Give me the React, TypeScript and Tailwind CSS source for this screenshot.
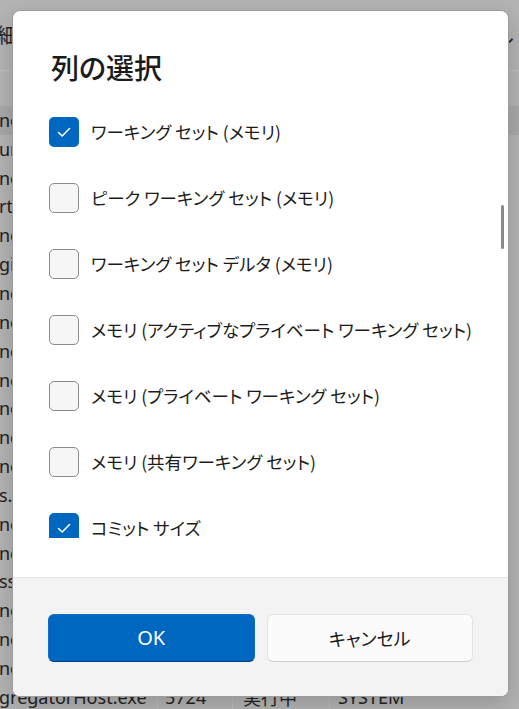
import React from 'react';

const items = [
  { label: 'ワーキング セット (メモリ)', checked: true },
  { label: 'ピーク ワーキング セット (メモリ)', checked: false },
  { label: 'ワーキング セット デルタ (メモリ)', checked: false },
  { label: 'メモリ (アクティブなプライベート ワーキング セット)', checked: false },
  { label: 'メモリ (プライベート ワーキング セット)', checked: false },
  { label: 'メモリ (共有ワーキング セット)', checked: false },
  { label: 'コミット サイズ', checked: true },
];

const rows = [
  'nc', 'ur', 'nc', 'rtl', 'nc', 'gis', 'nc', 'nc', 'nc', 'nc',
  'nc', 'nc', 'nc', 's.', 'nc', 'nc', 'ss.', 'nc', 'nc', 'nc',
];

function CheckBox({ checked }: { checked: boolean }) {
  if (checked) {
    return (
      <div className="w-[30px] h-[30px] shrink-0 rounded-[5px] bg-[#0067c0] flex items-center justify-center">
        <svg width="16" height="12" viewBox="0 0 16 12" fill="none">
          <path d="M2.5 6.5 L6.2 10 L13.5 2.5" stroke="white" strokeWidth="1.6" strokeLinecap="round" strokeLinejoin="round" />
        </svg>
      </div>
    );
  }
  return <div className="w-[30px] h-[30px] shrink-0 rounded-[5px] border border-[#8b8b8b] bg-[#f6f6f6]" />;
}

export default function App() {
  return (
    <div className="relative w-[519px] h-[709px] overflow-hidden bg-[#b4b4b4] text-[#222] font-['Noto_Sans_CJK_JP',sans-serif]">
      {/* Task manager behind the dialog */}
      <div className="h-[70px] flex items-center justify-between">
        <span className="ml-[-23px] text-[20px] leading-none">詳細</span>
        <span className="mr-[4px] text-[20px] leading-none">し</span>
      </div>
      <div className="h-px bg-[#bfbfbf]" />
      <div className="h-[35px]" />
      {rows.map((r, i) => (
        <div
          key={i}
          className={`h-[28.85px] flex items-center text-[18px] font-['Noto_Sans',sans-serif] ${i === 0 ? 'bg-[#a9a9a9]' : ''}`}
        >
          <span className="ml-[-1px]">{r}</span>
        </div>
      ))}
      <div className="h-[28.85px] flex items-center text-[18px] font-['Noto_Sans',sans-serif]">
        <span className="w-[158px] ml-[-1px]">gregatorHost.exe</span>
        <span className="w-[75px] pl-[7px] border-l border-[#bdbdbd]">5724</span>
        <span className="w-[97px] pl-[10px] border-l border-[#bdbdbd] font-['Noto_Sans_CJK_JP',sans-serif]">実行中</span>
        <span className="w-[180px] pl-[8px] border-l border-[#bdbdbd]">SYSTEM</span>
      </div>

      {/* Dialog */}
      <div className="absolute left-[12px] top-[10px] w-[497px] h-[687px] rounded-[8px] overflow-hidden border border-[#9c9c9c] bg-white shadow-[0_8px_24px_rgba(0,0,0,0.18)] flex flex-col text-[#1b1b1b] [font-feature-settings:'palt']">
        <div className="h-[566px] pt-[38px] px-[36px] relative">
          <h1 className="h-[36px] text-[28px] leading-[36px] font-medium pl-[2px]">列の選択</h1>
          <div className="mt-[14px] h-[439px] overflow-hidden">
            {items.map((it) => (
              <div key={it.label} className="h-[66px] flex items-center gap-[12px]">
                <CheckBox checked={it.checked} />
                <span className="text-[17.5px] leading-none whitespace-nowrap">{it.label}</span>
              </div>
            ))}
          </div>
          <div className="absolute left-[488px] top-[194px] w-[3px] h-[44px] rounded-full bg-[#8a8a8a]" />
        </div>
        <div className="flex-1 bg-[#f3f3f3] border-t border-[#e5e5e5] px-[35px] pt-[36px]">
          <div className="grid grid-cols-2 gap-[12px]">
            <button className="h-[48px] rounded-[6px] bg-[#0067c0] border border-[#0f6cc2] border-b-[#003e92] text-white text-[20px] font-['Noto_Sans',sans-serif]">
              OK
            </button>
            <button className="h-[48px] rounded-[6px] bg-[#fbfbfb] border border-[#e2e2e2] border-b-[#cfcfcf] text-[18px]">
              キャンセル
            </button>
          </div>
        </div>
      </div>
    </div>
  );
}
